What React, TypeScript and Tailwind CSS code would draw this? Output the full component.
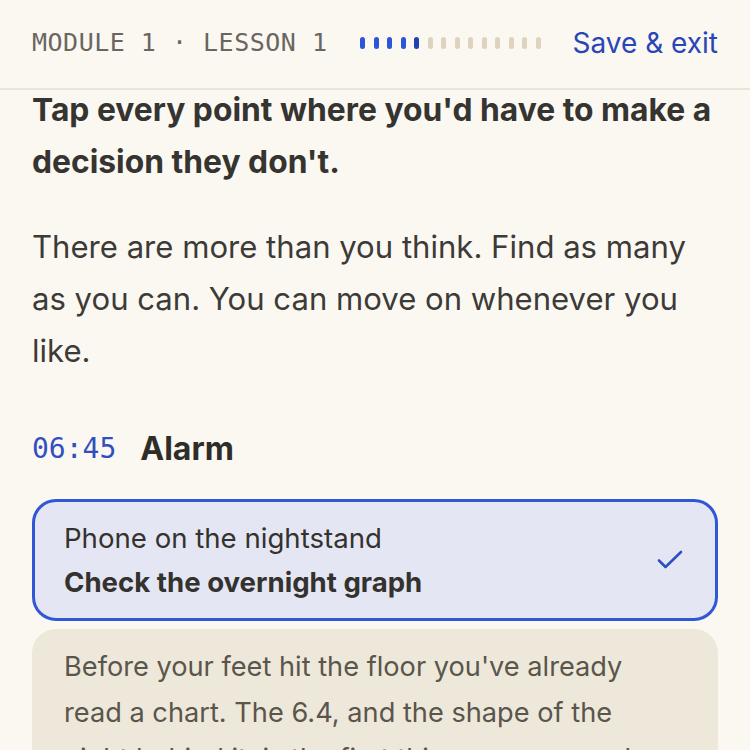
import React from 'react';

const sans = { fontFamily: '"Inter", "Noto Sans", sans-serif' };
const mono = { fontFamily: '"DejaVu Sans Mono", "Liberation Mono", monospace' };

const TOTAL_STEPS = 14;
const DONE_STEPS = 5;

function Progress() {
  return (
    <div className="flex items-center gap-[8.5px]">
      {Array.from({ length: TOTAL_STEPS }).map((_, i) => (
        <span
          key={i}
          className={
            i < DONE_STEPS - 1
              ? 'h-[12px] w-[5px] rounded-full bg-[#2b56d9]'
              : i === DONE_STEPS - 1
              ? 'h-[12px] w-[5px] rounded-full bg-[#1f42b3]'
              : 'h-[12px] w-[5px] rounded-full bg-[#ddd3bf]'
          }
        />
      ))}
    </div>
  );
}

function CheckIcon() {
  return (
    <svg width="26" height="20" viewBox="0 0 26 20" fill="none">
      <path
        d="M2 10.5 L8.5 17 L24 2"
        stroke="#2f4fbd"
        strokeWidth="2.6"
        strokeLinecap="round"
        strokeLinejoin="round"
      />
    </svg>
  );
}

export default function App() {
  return (
    <div className="h-[750px] w-[750px] overflow-hidden bg-[#fbf8f2]" style={sans}>
      {/* top bar */}
      <header className="flex h-[90px] items-center justify-between border-b-2 border-[#ece4d7] px-8 pb-[2px]">
        <div className="flex items-center gap-[33px]">
          <span className="text-[25px] tracking-[0.5px] text-[#6a665f]" style={mono}>
            MODULE 1 · LESSON 1
          </span>
          <Progress />
        </div>
        <button className="text-[28px] text-[#2a46b6]">Save &amp; exit</button>
      </header>

      <main className="px-8">
        <h1 className="-mt-[6px] text-[31.8px] font-bold leading-[52px] text-[#363431]">
          Tap every point where you'd have to make a decision they don't.
        </h1>

        <p className="mt-[33px] text-[31.1px] leading-[52px] text-[#3d3b37]">
          There are more than you think. Find as many as you can. You can move on whenever you like.
        </p>

        <div className="mt-[46px] flex items-center gap-[24px] leading-[52px]">
          <span className="text-[28px] text-[#3150c0]" style={mono}>
            06:45
          </span>
          <span className="text-[32px] font-bold text-[#2f2d2a]">Alarm</span>
        </div>

        <div className="mt-[24px] flex items-center justify-between rounded-[24px] border-[3px] border-[#3157d5] bg-[#e4e7f3] py-[14px] pl-[29px] pr-[32px]">
          <div className="text-[27.6px] leading-[44px] text-[#34322f]">
            <div>Phone on the nightstand</div>
            <div className="font-bold">Check the overnight graph</div>
          </div>
          <CheckIcon />
        </div>

        <div className="mt-2 rounded-[24px] bg-[#eee8da] pb-6 pl-8 pr-[44px] pt-[15px]">
          <p className="text-[27.2px] leading-[46px] text-[#5a554d]">
            Before your feet hit the floor you've already read a chart. The 6.4, and the shape of the
            night behind it, is the first thing you see each morning.
          </p>
        </div>
      </main>
    </div>
  );
}
